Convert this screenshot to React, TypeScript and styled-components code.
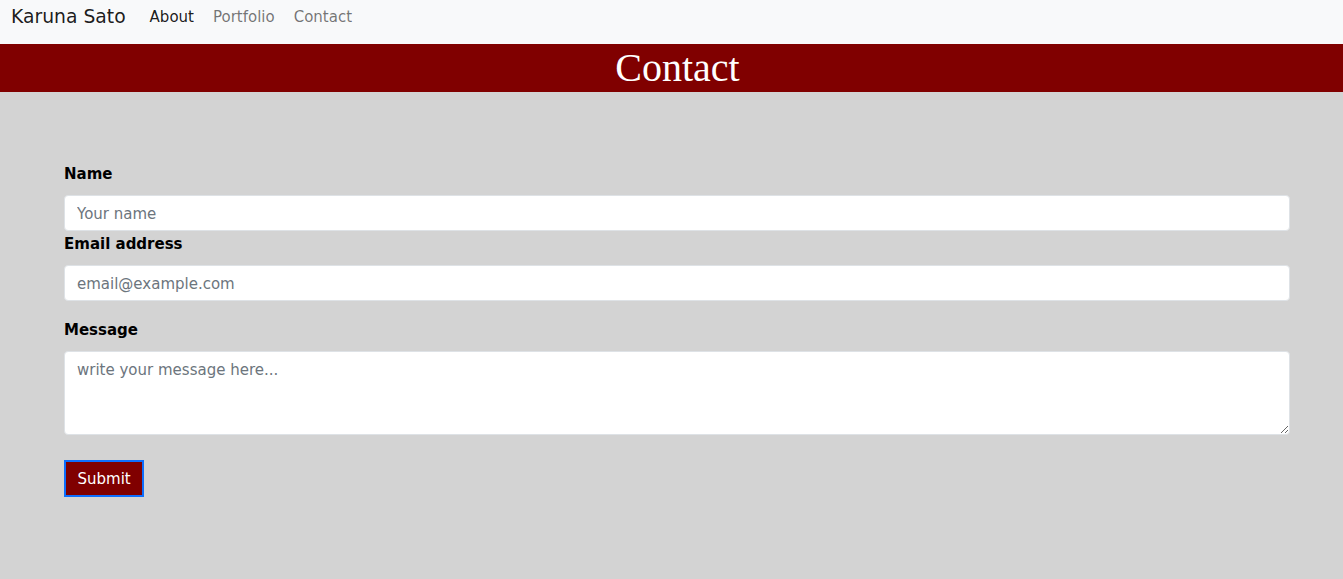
import { FunctionComponent } from 'react';
import styled, { createGlobalStyle } from 'styled-components';

const GlobalStyle = createGlobalStyle`
    html, body {
        margin: 0;
        padding: 0;
        background: #d3d3d3;
    }
    body {
        font-family: 'DejaVu Sans', sans-serif;
        font-size: 15px;
        color: #212529;
    }
    * {
        box-sizing: border-box;
    }
`;

const Page = styled.div`
    min-height: 579px;
    background: #d3d3d3;
    display: flex;
    flex-direction: column;
`;

const NavBar = styled.nav`
    height: 44px;
    background: #f8f9fa;
    display: flex;
    align-items: flex-start;
    padding: 5px 11px 0;
`;

const Brand = styled.a`
    font-size: 18.75px;
    line-height: 24px;
    color: rgba(0, 0, 0, 0.9);
    margin-right: 14.5px;
    text-decoration: none;
`;

const NavLinks = styled.div`
    display: flex;
`;

const NavLink = styled.a<{ active?: boolean }>`
    font-size: 15px;
    line-height: 24px;
    padding: 0 9.5px;
    text-decoration: none;
    color: ${({ active }) => (active ? 'rgba(0, 0, 0, 0.9)' : 'rgba(0, 0, 0, 0.55)')};
`;

const Banner = styled.header`
    height: 48px;
    background: #800000;
    display: flex;
    align-items: center;
    justify-content: center;
    padding-left: 12px;
`;

const BannerTitle = styled.h1`
    margin: 0;
    font: 400 40px/48px 'Liberation Serif', 'Times New Roman', serif;
    color: #ffffff;
`;

const Main = styled.main`
    padding: 69px 53px 0 64px;
`;

const Form = styled.form`
    display: flex;
    flex-direction: column;
    align-items: flex-start;
`;

const Field = styled.div<{ spaced?: boolean }>`
    width: 100%;
    margin-bottom: ${({ spaced }) => (spaced ? '16px' : '0')};
`;

const Label = styled.label`
    display: block;
    font-weight: 700;
    font-size: 15px;
    line-height: 26px;
    color: #000000;
    margin-bottom: 8px;
`;

const Input = styled.input`
    display: block;
    width: 100%;
    height: 36px;
    padding: 7px 12px 5px;
    font-family: inherit;
    font-size: 15px;
    color: #212529;
    background: #ffffff;
    border: 1px solid #dee2e6;
    border-radius: 4px;
    outline: none;

    &::placeholder {
        color: #6c757d;
    }
`;

const TextArea = styled.textarea`
    display: block;
    width: 100%;
    height: 84px;
    padding: 6px 12px;
    font-family: inherit;
    font-size: 15px;
    line-height: 24px;
    color: #212529;
    background: #ffffff;
    border: 1px solid #dee2e6;
    border-radius: 4px;
    outline: none;
    resize: vertical;

    &::placeholder {
        color: #6c757d;
    }
`;

const SubmitButton = styled.button`
    margin-top: 9px;
    height: 37px;
    padding: 0 11.5px;
    font-family: inherit;
    font-size: 15px;
    color: #ffffff;
    background: #800000;
    border: 2px solid #0d6efd;
    border-radius: 0;
`;

const App: FunctionComponent = () => {
    return (
        <Page>
            <GlobalStyle />
            <NavBar>
                <Brand href="#">Karuna Sato</Brand>
                <NavLinks>
                    <NavLink href="#" active>
                        About
                    </NavLink>
                    <NavLink href="#">Portfolio</NavLink>
                    <NavLink href="#">Contact</NavLink>
                </NavLinks>
            </NavBar>
            <Banner>
                <BannerTitle>Contact</BannerTitle>
            </Banner>
            <Main>
                <Form onSubmit={(e) => e.preventDefault()}>
                    <Field>
                        <Label htmlFor="name">Name</Label>
                        <Input id="name" type="text" placeholder="Your name" />
                    </Field>
                    <Field spaced>
                        <Label htmlFor="email">Email address</Label>
                        <Input
                            id="email"
                            type="email"
                            placeholder="email@example.com"
                        />
                    </Field>
                    <Field spaced>
                        <Label htmlFor="message">Message</Label>
                        <TextArea
                            id="message"
                            placeholder="write your message here..."
                        />
                    </Field>
                    <SubmitButton type="submit">Submit</SubmitButton>
                </Form>
            </Main>
        </Page>
    );
};

export default App;
